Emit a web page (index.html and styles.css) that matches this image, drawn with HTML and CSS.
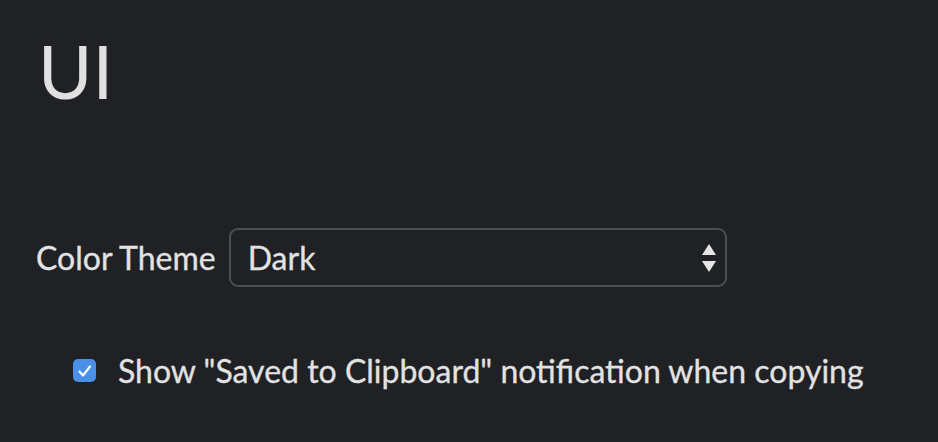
FILE: index.html
```html
<!DOCTYPE html>
<html>
<head>
<meta charset="utf-8">
<link rel="stylesheet" href="styles.css">
</head>
<body>
<div class="page">
  <h1 class="title">UI</h1>
  <div class="row theme-row">
    <label class="label">Color Theme</label>
    <div class="select">
      <span class="select-value">Dark</span>
      <svg class="arrows" width="14" height="28" viewBox="0 0 14 28">
        <polygon points="7,0 14,11 0,11" fill="#e4e4e4"/>
        <polygon points="0,17 14,17 7,28" fill="#e4e4e4"/>
      </svg>
    </div>
  </div>
  <div class="row check-row">
    <span class="checkbox">
      <svg width="16" height="14" viewBox="0 0 16 14"><path d="M2.5 7.5 L6 11.5 L13 2.5" fill="none" stroke="#fff" stroke-width="2.2" stroke-linecap="round" stroke-linejoin="round"/></svg>
    </span>
    <span class="check-label">Show "Saved to Clipboard" notification when copying</span>
  </div>
</div>
</body>
</html>
```
FILE: styles.css
```css
html, body {
  margin: 0;
  padding: 0;
  background: #1f2125;
}
body {
  font-family: "Lato", "Liberation Sans", sans-serif;
  color: #e2e2e2;
  width: 938px;
  height: 442px;
  overflow: hidden;
}
.page {
  padding: 0 0 0 36px;
}
.title {
  margin: 34px 0 0 2px;
  font-size: 74px;
  font-weight: 400;
  line-height: 1;
  color: #e0e0e0;
}
.row {
  display: flex;
  align-items: center;
}
.theme-row {
  margin-top: 120px;
}
.label,
.select-value,
.check-label {
  font-size: 32px;
  -webkit-text-stroke: 0.3px #e2e2e2;
}
.label {
  margin-right: 13px;
}
.select {
  box-sizing: border-box;
  width: 498px;
  height: 59px;
  border: 2px solid #4b4e56;
  border-radius: 9px;
  display: flex;
  align-items: center;
  justify-content: space-between;
  padding: 0 9px 0 17px;
}
.check-row {
  margin-top: 64px;
  padding-left: 37px;
}
.checkbox {
  width: 23px;
  height: 23px;
  border-radius: 5px;
  background: #4a90e8;
  display: flex;
  align-items: center;
  justify-content: center;
  margin-right: 22px;
}
```
